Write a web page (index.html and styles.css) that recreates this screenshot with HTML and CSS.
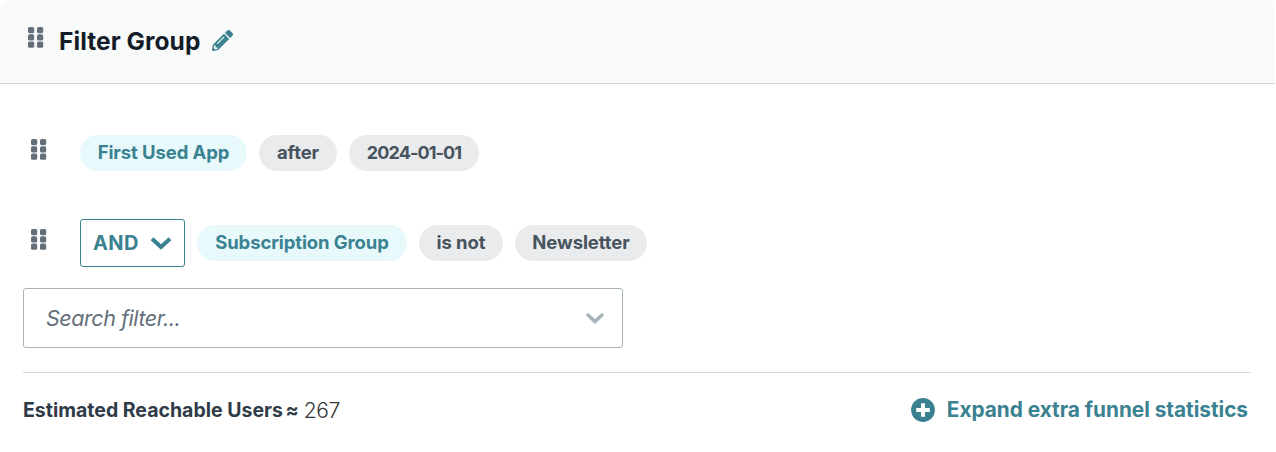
FILE: index.html
```html
<!DOCTYPE html>
<html lang="en">
<head>
<meta charset="utf-8">
<title>Filter Group</title>
<link rel="stylesheet" href="styles.css">
</head>
<body>
<svg class="sprite" aria-hidden="true">
  <symbol id="grip" viewBox="0 0 16 21">
    <rect x="0" y="0" width="6.2" height="6.2" rx="1.6"/><rect x="9" y="0" width="6.2" height="6.2" rx="1.6"/>
    <rect x="0" y="7.3" width="6.2" height="6.2" rx="1.6"/><rect x="9" y="7.3" width="6.2" height="6.2" rx="1.6"/>
    <rect x="0" y="14.6" width="6.2" height="6.2" rx="1.6"/><rect x="9" y="14.6" width="6.2" height="6.2" rx="1.6"/>
  </symbol>
</svg>
<section class="card">
  <header class="card-header">
    <svg class="grip"><use href="#grip"/></svg>
    <h2 class="title">Filter Group</h2>
    <svg class="pencil" viewBox="0 0 512 512"><path d="M497.900 142.100l-46.100 46.100c-4.700 4.700-12.300 4.700-17 0l-111-111c-4.700-4.700-4.700-12.300 0-17l46.100-46.100c18.700-18.700 49.100-18.700 67.900 0l60.100 60.100c18.800 18.700 18.800 49.100 0 67.900zM284.200 99.800L21.600 362.400.4 483.900c-2.900 16.400 11.400 30.600 27.800 27.800l121.500-21.300 262.600-262.600c4.700-4.700 4.700-12.300 0-17l-111-111c-4.800-4.700-12.400-4.700-17.100 0zM124.100 339.900c-5.500-5.500-5.500-14.300 0-19.800l154-154c5.500-5.500 14.300-5.500 19.800 0s5.500 14.300 0 19.800l-154 154c-5.500 5.500-14.300 5.500-19.800 0zM88 424h48v36.300l-64.500 11.300-31.100-31.100L51.700 376H88v48z"/></svg>
  </header>
  <div class="card-body">
    <div class="row row-first">
      <svg class="grip"><use href="#grip"/></svg>
      <span class="pill pill-name w-first">First Used App</span>
      <span class="pill w-after">after</span>
      <span class="pill w-date">2024-01-01</span>
    </div>
    <div class="row">
      <svg class="grip"><use href="#grip"/></svg>
      <button class="operator">AND<svg class="operator-arrow" viewBox="0 0 22 14"><path d="M2 2.700 11 11l9-8.300"/></svg></button>
      <span class="pill pill-name w-sub">Subscription Group</span>
      <span class="pill w-isnot">is not</span>
      <span class="pill w-news">Newsletter</span>
    </div>
    <div class="search"><span class="placeholder">Search filter...</span><svg class="search-arrow" viewBox="0 0 18 11"><path d="M2 2l7 6.600L16 2"/></svg></div>
    <footer class="footer">
      <div class="estimate"><strong class="estimate-label">Estimated Reachable Users <span class="approx">≈</span></strong><span class="estimate-value">267</span></div>
      <a class="expand"><svg class="plus" viewBox="0 0 24 24"><circle cx="12" cy="12" r="11.900"/><path d="M12 5.200v13.600M5.200 12h13.600"/></svg><span class="expand-label">Expand extra funnel statistics</span></a>
    </footer>
  </div>
</section>
</body>
</html>
```

FILE: styles.css
```css
* { box-sizing: border-box; }
body { margin: 0; background: #fff; color: #2f3b47; font-family: Inter, "Liberation Sans", sans-serif; }
.sprite { position: absolute; width: 0; height: 0; }
svg { display: block; flex: none; }
.card { width: 1275px; height: 452px; }
.card-header { display: flex; align-items: center; height: 84px; padding: 0 28px 3px; background: #f8faf9; border-bottom: 1px solid #d5dada; border-radius: 10px 10px 0 0; }
.grip { width: 16px; height: 21px; fill: #646f7a; }
.card-header .grip { margin: -5px 16px 0 0; }
.title { width: 141px; margin: 0 0 0 -1px; padding-top: 1px; font-size: 24.500px; line-height: 32px; font-weight: 650; letter-spacing: 0.07px; color: #141c28; white-space: nowrap; }
.pencil { width: 21px; height: 21px; margin-left: 12px; fill: #3a8291; }
.card-body { padding: 45px 24px 0 23px; }
.row { display: flex; align-items: center; gap: 12px; height: 48px; padding-left: 7.500px; }
.row-first { margin-bottom: 42px; }
.row .grip { margin: -7px 21.500px 0 0; }
.pill { height: 36px; flex: none; border-radius: 18px; background: #e9ebec; color: #47535e; font-size: 18.500px; line-height: 35px; font-weight: 650; letter-spacing: -0.1px; text-align: center; white-space: nowrap; }
.pill-name { background: #e8f9fc; color: #3a8291; }
.w-first { width: 167px; }
.w-after { width: 78px; }
.w-date { width: 130px; font-size: 18px; letter-spacing: -0.900px; }
.w-sub { width: 210px; }
.w-isnot { width: 84px; }
.w-news { width: 132px; }
.operator { display: flex; align-items: center; justify-content: space-between; width: 105px; height: 48px; padding: 0 12px; border: 1px solid #3a8291; border-radius: 3px; background: #fff; color: #3a8291; font: 650 20px/46px Inter, "Liberation Sans", sans-serif; letter-spacing: 0.4px; }
.operator-arrow { width: 22px; height: 14px; fill: none; stroke: #3a8291; stroke-width: 4; }
.search { display: flex; align-items: center; justify-content: space-between; width: 600px; height: 60px; margin-top: 21px; padding: 0 18px 0 22px; border: 1px solid #a6b3b9; border-radius: 3px; }
.placeholder { color: #646f7a; font-size: 21.500px; line-height: 58px; font-weight: 370; font-style: italic; letter-spacing: -0.450px; }
.search-arrow { width: 18px; height: 11px; fill: none; stroke: #a6b3b9; stroke-width: 3.400; stroke-linecap: round; }
.footer { display: flex; align-items: center; justify-content: space-between; height: 75px; margin-top: 24px; padding-right: 3px; border-top: 1px solid #d7dadc; }
.estimate { display: flex; align-items: center; gap: 5px; font-size: 19.500px; }
.estimate-label { font-weight: 650; letter-spacing: 0; white-space: nowrap; }
.approx { margin-left: -2px; }
.estimate-value { font-size: 21px; font-weight: 350; letter-spacing: -0.400px; color: #333; }
.expand { display: flex; align-items: center; gap: 12px; color: #3a8291; font-size: 20.800px; font-weight: 650; }
.expand-label { padding-bottom: 1px; letter-spacing: -0.020px; white-space: nowrap; }
.plus { width: 24px; height: 24px; fill: #3a8291; }
.plus path { stroke: #fff; stroke-width: 4; }
```
